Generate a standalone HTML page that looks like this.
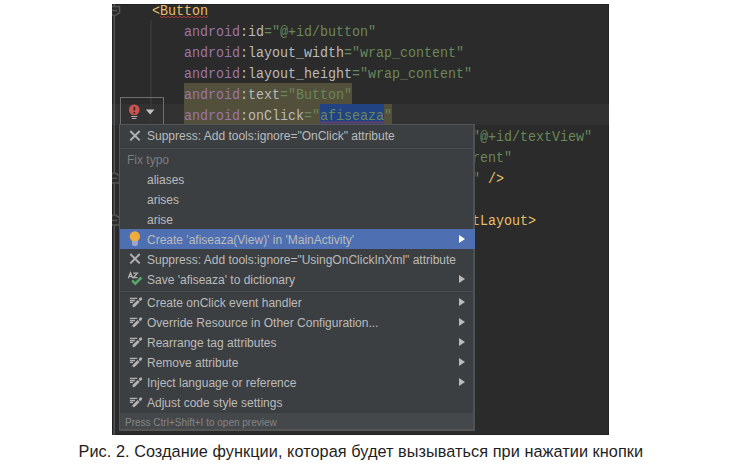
<!DOCTYPE html>
<html><head><meta charset="utf-8">
<style>
html,body{margin:0;padding:0;background:#fff;width:739px;height:471px;overflow:hidden;position:relative}
#ed{position:absolute;left:112px;top:4px;width:497px;height:431px;background:#2b2b2b;overflow:hidden;box-shadow:inset 0 0 0 1px #222}
.ln{position:absolute;left:8px;margin-top:2px;height:21px;line-height:21px;font-family:"Liberation Mono",monospace;font-size:14.5px;transform:scaleX(0.91954);transform-origin:0 0;white-space:pre;color:#a9b7c6}
.t{color:#e8bf6a}.ns{color:#9876aa}.at{color:#bababa}.s{color:#6a8759}
.hl{position:absolute}
#pop{position:absolute;left:7px;top:120px;width:353px;height:304px;background:#3c3f41;border:1px solid #555;border-bottom:2px solid #555;border-right:2px solid #4f5253;font-family:"Liberation Sans",sans-serif;font-size:12px;color:#bbbbbb}
.it{position:absolute;left:0;width:353px;height:20px;line-height:20px;white-space:pre}
.it .tx{position:absolute;left:27px;top:1px}
.ic{position:absolute;left:0}
.sep{position:absolute;left:0;width:353px;height:1px;background:#4a4d4f}
.arr{position:absolute;left:339px;top:6px;width:0;height:0;border-left:6px solid #bbb;border-top:4.5px solid transparent;border-bottom:4.5px solid transparent}
#cap{position:absolute;left:78.5px;top:441px;letter-spacing:0.05px;font-family:"Liberation Sans",sans-serif;font-size:16.3px;line-height:20px;color:#1e1e1e;white-space:pre}
</style></head><body>
<div id="ed">
  <!-- current line -->
  <div class="hl" style="left:0;top:100px;width:497px;height:21px;background:#323232"></div>
  <!-- warning bg -->
  <div class="hl" style="left:72px;top:79px;width:168px;height:21px;background:#52503a"></div>
  <div class="hl" style="left:72px;top:100px;width:208px;height:21px;background:#52503a"></div>
  <!-- selection -->
  <div class="hl" style="left:208px;top:100px;width:64px;height:21px;background:#214283"></div>
  <!-- indent guide -->
  <div class="hl" style="left:38px;top:16px;width:2px;height:104px;background:#353535"></div>

  <!-- fold marker -->
  <svg class="hl" style="left:0;top:0" width="10" height="431"><path d="M2.3,0 V431" fill="none" stroke="#555" stroke-width="1.5"/><path d="M-2,2.5 H7.5 V8.5 L2.3,12 L-2,9 Z" fill="#2b2b2b" stroke="#555" stroke-width="1.5"/><path d="M0,6.5 H5" stroke="#555" stroke-width="1.5"/><path d="M-2,179 H7.5 V171.5 L2.3,168.5 L-2,171 Z" fill="#2b2b2b" stroke="#555" stroke-width="1.5"/><path d="M0,174.4 H5" stroke="#555" stroke-width="1.5"/><path d="M-2,221 H7.5 V213.5 L2.3,210.5 L-2,213 Z" fill="#2b2b2b" stroke="#555" stroke-width="1.5"/><path d="M0,216.4 H5" stroke="#555" stroke-width="1.5"/></svg>
  <svg class="hl" style="left:48px;top:0" width="49" height="16"><polyline points="0,12 2,14 4,12 6,14 8,12 10,14 12,12 14,14 16,12 18,14 20,12 22,14 24,12 26,14 28,12 30,14 32,12 34,14 36,12 38,14 40,12 42,14 44,12 46,14 48,12" fill="none" stroke="#b8403c" stroke-width="0.9"/></svg>
  <svg class="hl" style="left:208px;top:0" width="65" height="122"><polyline points="0,117.5 2,119.5 4,117.5 6,119.5 8,117.5 10,119.5 12,117.5 14,119.5 16,117.5 18,119.5 20,117.5 22,119.5 24,117.5 26,119.5 28,117.5 30,119.5 32,117.5 34,119.5 36,117.5 38,119.5 40,117.5 42,119.5 44,117.5 46,119.5 48,117.5 50,119.5 52,117.5 54,119.5 56,117.5 58,119.5 60,117.5 62,119.5 64,117.5" fill="none" stroke="#bc3f3c" stroke-width="0.9"/></svg>

  <div class="ln" style="top:-5px">    <span class="t">&lt;Button</span></div>
  <div class="ln" style="top:16px">        <span class="ns">android</span><span class="at">:id</span><span class="s">="@+id/button"</span></div>
  <div class="ln" style="top:37px">        <span class="ns">android</span><span class="at">:layout_width</span><span class="s">="wrap_content"</span></div>
  <div class="ln" style="top:58px">        <span class="ns">android</span><span class="at">:layout_height</span><span class="s">="wrap_content"</span></div>
  <div class="ln" style="top:79px">        <span class="ns">android</span><span class="at">:text</span><span class="s">="Button"</span></div>
  <div class="ln" style="top:100px">        <span class="ns">android</span><span class="at">:onClick</span><span class="s">="afiseaza"</span></div>
  <div class="ln" style="top:121px">        <span class="ns">app</span><span class="at">:layout_constraintTop_toBottomOf</span><span class="s">="@+id/textView"</span></div>
  <div class="ln" style="top:142px">        <span class="ns">app</span><span class="at">:layout_constraintEnd_toEndOf</span><span class="s">="parent"</span></div>
  <div class="ln" style="top:163px">        <span class="ns">app</span><span class="at">:layout_constraintTop_toTopOf</span><span class="s">="pa"</span><span class="t"> /&gt;</span></div>
  <div class="ln" style="top:205px"><span class="t">&lt;/androidx.constraintlayout.widget.ConstraintLayout&gt;</span></div>

  <!-- intention box -->
  <div class="hl" style="left:8px;top:93px;width:42px;height:28px;border:1px solid #6f6f6f;border-bottom:none"></div>
  <svg class="hl" style="left:0;top:0" width="60" height="125"><circle cx="22.25" cy="105.75" r="5.35" fill="#cc534f"/><path d="M19.3,108 H25.2 V110.6 H19.3 Z" fill="#cc534f"/><path d="M21.5,102.8 H23.2 V106.5 H21.5 Z M21.5,107.9 H23.2 V109.6 H21.5 Z" fill="#2b2b2b"/><path d="M19.1,112.5 H25.4 M20,114.5 H24.4" stroke="#b0b0b0" stroke-width="1" fill="none"/><path d="M33.9,105.5 L42.4,105.5 L38.15,110.6 Z" fill="#c4c4c4"/></svg>

  <div id="pop">
    <div class="it" style="top:0;height:23px"><svg class="ic" width="30" height="20" style="top:0"><path d="M10.3,6 L19.7,15.4 M19.7,6 L10.3,15.4" stroke="#afb1b3" stroke-width="2" fill="none"/></svg><span class="tx" style="top:1px">Suppress: Add tools:ignore="OnClick" attribute</span></div>
    <div class="sep" style="top:23px"></div>
    <div class="it" style="top:24px;color:#7d7d7d"><span class="tx" style="left:7px">Fix typo</span></div>
    <div class="it" style="top:44px"><span class="tx">aliases</span></div>
    <div class="it" style="top:64px"><span class="tx">arises</span></div>
    <div class="it" style="top:84px"><span class="tx">arise</span></div>
    <div class="it" style="top:104px;width:355px;background:#4e6fb1"><svg class="ic" width="30" height="20" style="top:0"><circle cx="14.85" cy="7.4" r="5.15" fill="#f0ac3a"/><path d="M11.9,9 H17.9 V12 H11.9 Z" fill="#f0ac3a"/><path d="M11.8,12 H18.1 L17.7,15.5 Q17.3,17 15.8,17 H14.1 Q12.6,17 12.2,15.5 Z" fill="#9ca6cc"/></svg><span class="tx">Create 'afiseaza(View)' in 'MainActivity'</span><div class="arr" style="border-left-color:#fff"></div></div>
    <div class="it" style="top:124px"><svg class="ic" width="30" height="20" style="top:0"><path d="M10.3,5 L19.7,14.4 M19.7,5 L10.3,14.4" stroke="#afb1b3" stroke-width="2" fill="none"/></svg><span class="tx">Suppress: Add tools:ignore="UsingOnClickInXml" attribute</span></div>
    <div class="it" style="top:144px"><svg class="ic" width="30" height="20" style="top:0"><path d="M8.3,9.2 L10.5,3.8 L12.7,9.2 M9.2,7.4 H11.8 M13.2,4.2 H17.3 L13.3,8.7 H17.5" stroke="#b4b4b4" stroke-width="1.3" fill="none"/><path d="M12.2,11.4 L15.3,14.7 L21.4,8.5" stroke="#59a869" stroke-width="2.5" fill="none"/></svg><span class="tx">Save 'afiseaza' to dictionary</span><div class="arr"></div></div>
    <div class="sep" style="top:166px"></div>
    <div class="it" style="top:167px"><svg class="ic" width="30" height="20" style="top:0"><path d="M9.9,6.4 H17.2 M9.9,8.5 H15 M9.9,10.4 H13" stroke="#b0b0b0" stroke-width="1.3" fill="none"/><path d="M14.6,12.9 L18.6,8.9" stroke="#b4b4b4" stroke-width="2.8" fill="none"/><path d="M14.6,12.9 L13.8,13.7" stroke="#b4b4b4" stroke-width="2.8" stroke-linecap="round" fill="none"/><path d="M20.2,7.4 L20.8,6.8" stroke="#b4b4b4" stroke-width="2.8" stroke-linecap="round" fill="none"/></svg><span class="tx">Create onClick event handler</span><div class="arr"></div></div>
    <div class="it" style="top:187px"><svg class="ic" width="30" height="20" style="top:0"><path d="M9.9,6.4 H17.2 M9.9,8.5 H15 M9.9,10.4 H13" stroke="#b0b0b0" stroke-width="1.3" fill="none"/><path d="M14.6,12.9 L18.6,8.9" stroke="#b4b4b4" stroke-width="2.8" fill="none"/><path d="M14.6,12.9 L13.8,13.7" stroke="#b4b4b4" stroke-width="2.8" stroke-linecap="round" fill="none"/><path d="M20.2,7.4 L20.8,6.8" stroke="#b4b4b4" stroke-width="2.8" stroke-linecap="round" fill="none"/></svg><span class="tx">Override Resource in Other Configuration...</span><div class="arr"></div></div>
    <div class="it" style="top:207px"><svg class="ic" width="30" height="20" style="top:0"><path d="M9.9,6.4 H17.2 M9.9,8.5 H15 M9.9,10.4 H13" stroke="#b0b0b0" stroke-width="1.3" fill="none"/><path d="M14.6,12.9 L18.6,8.9" stroke="#b4b4b4" stroke-width="2.8" fill="none"/><path d="M14.6,12.9 L13.8,13.7" stroke="#b4b4b4" stroke-width="2.8" stroke-linecap="round" fill="none"/><path d="M20.2,7.4 L20.8,6.8" stroke="#b4b4b4" stroke-width="2.8" stroke-linecap="round" fill="none"/></svg><span class="tx">Rearrange tag attributes</span><div class="arr"></div></div>
    <div class="it" style="top:227px"><svg class="ic" width="30" height="20" style="top:0"><path d="M9.9,6.4 H17.2 M9.9,8.5 H15 M9.9,10.4 H13" stroke="#b0b0b0" stroke-width="1.3" fill="none"/><path d="M14.6,12.9 L18.6,8.9" stroke="#b4b4b4" stroke-width="2.8" fill="none"/><path d="M14.6,12.9 L13.8,13.7" stroke="#b4b4b4" stroke-width="2.8" stroke-linecap="round" fill="none"/><path d="M20.2,7.4 L20.8,6.8" stroke="#b4b4b4" stroke-width="2.8" stroke-linecap="round" fill="none"/></svg><span class="tx">Remove attribute</span><div class="arr"></div></div>
    <div class="it" style="top:247px"><svg class="ic" width="30" height="20" style="top:0"><path d="M9.9,6.4 H17.2 M9.9,8.5 H15 M9.9,10.4 H13" stroke="#b0b0b0" stroke-width="1.3" fill="none"/><path d="M14.6,12.9 L18.6,8.9" stroke="#b4b4b4" stroke-width="2.8" fill="none"/><path d="M14.6,12.9 L13.8,13.7" stroke="#b4b4b4" stroke-width="2.8" stroke-linecap="round" fill="none"/><path d="M20.2,7.4 L20.8,6.8" stroke="#b4b4b4" stroke-width="2.8" stroke-linecap="round" fill="none"/></svg><span class="tx">Inject language or reference</span><div class="arr"></div></div>
    <div class="it" style="top:267px"><svg class="ic" width="30" height="20" style="top:0"><path d="M9.9,6.4 H17.2 M9.9,8.5 H15 M9.9,10.4 H13" stroke="#b0b0b0" stroke-width="1.3" fill="none"/><path d="M14.6,12.9 L18.6,8.9" stroke="#b4b4b4" stroke-width="2.8" fill="none"/><path d="M14.6,12.9 L13.8,13.7" stroke="#b4b4b4" stroke-width="2.8" stroke-linecap="round" fill="none"/><path d="M20.2,7.4 L20.8,6.8" stroke="#b4b4b4" stroke-width="2.8" stroke-linecap="round" fill="none"/></svg><span class="tx">Adjust code style settings</span></div>
    <div class="it st" style="top:288px;height:16px;background:#45484a;color:#858585;font-size:10px;line-height:16px"><span class="tx" style="left:5px;top:2px">Press Ctrl+Shift+I to open preview</span></div>
  </div>
</div>
<div id="cap">Рис. 2. Создание функции, которая будет вызываться при нажатии кнопки</div>
</body></html>
